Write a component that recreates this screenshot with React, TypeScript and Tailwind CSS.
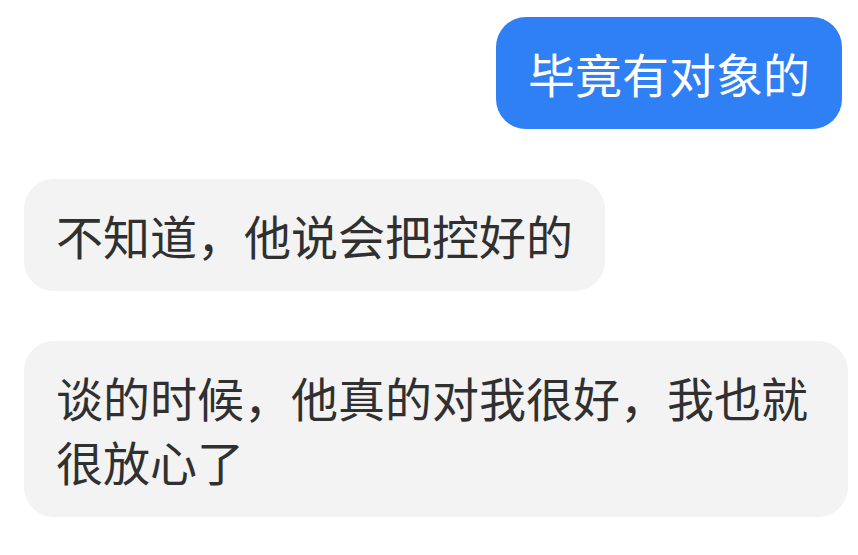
const messages = [
  { id: 1, mine: true, text: "毕竟有对象的" },
  { id: 2, mine: false, text: "不知道，他说会把控好的" },
  { id: 3, mine: false, text: "谈的时候，他真的对我很好，我也就很放心了" },
];

export default function App() {
  return (
    <div
      className="w-[858px] h-[555px] bg-white overflow-hidden flex flex-col gap-[50px] pt-[17px] pl-[24px] pr-[10px]"
      style={{ fontFamily: '"Noto Sans CJK SC", "Noto Sans", sans-serif' }}>
      {messages.map((m) => (
        <div
          key={m.id}
          className={m.mine ? "flex justify-end pr-[6px]" : "flex justify-start"}>
          <div
            className={
              m.mine
                ? "bg-[#2f7ff5] text-white rounded-[30px] px-[32px] py-[24px] text-[47px] leading-[64px] max-w-[824px]"
                : "bg-[#f3f3f3] text-[#303030] rounded-[30px] px-[32px] py-[24px] text-[47px] leading-[64px] max-w-[824px]"
            }>
            {m.text}
          </div>
        </div>
      ))}
    </div>
  );
}
